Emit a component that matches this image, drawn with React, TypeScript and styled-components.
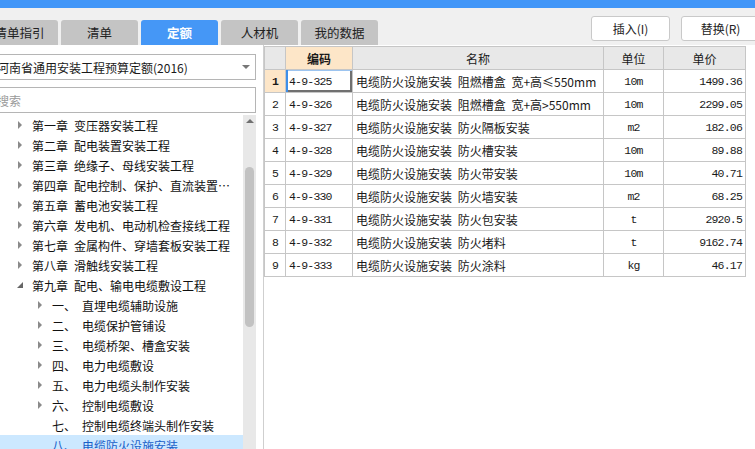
import React from "react";
import styled, { createGlobalStyle, css } from "styled-components";

const GlobalStyle = createGlobalStyle`
  html, body {
    margin: 0;
    padding: 0;
  }
  body {
    width: 755px;
    height: 449px;
    overflow: hidden;
    background: #f0f0f0;
    font-family: "Noto Sans CJK SC", "Liberation Sans", sans-serif;
    font-size: 12px;
    color: #1a1a1a;
  }
  * {
    box-sizing: border-box;
  }
`;

const Page = styled.div`
  display: flex;
  flex-direction: column;
  width: 755px;
  height: 449px;
  overflow: hidden;
`;

const TitleStrip = styled.div`
  height: 8px;
  background: #4196f8;
`;

const Toolbar = styled.div`
  height: 37px;
  display: flex;
  justify-content: space-between;
  background: #f0f0f0;
`;

const Tabs = styled.div`
  display: flex;
  align-items: flex-end;
  gap: 3px;
  margin-left: -19px;
`;

const Tab = styled.div<{ $active?: boolean }>`
  width: 77px;
  height: 25px;
  display: flex;
  align-items: center;
  justify-content: center;
  border-radius: 3px 3px 0 0;
  font-size: 12.5px;
  background: #c4c4c4;
  color: #222;
  ${({ $active }) =>
    $active &&
    css`
      background: #4597f6;
      color: #fff;
      font-weight: bold;
    `}
`;

const Actions = styled.div`
  display: flex;
  gap: 11px;
  padding-top: 8px;
  margin-right: -5px;
`;

const ActionButton = styled.button`
  width: 79px;
  height: 25px;
  background: #fff;
  border: 1px solid #c9c9c9;
  border-radius: 3px;
  font-family: "Noto Sans CJK SC", "Liberation Sans", sans-serif;
  font-size: 12px;
  color: #222;
  padding: 0;
`;

const Main = styled.div`
  flex: 1;
  display: flex;
  background: #fff;
  min-height: 0;
`;

const LeftPanel = styled.div`
  width: 257px;
  display: flex;
  flex-direction: column;
  padding-top: 9px;
`;

const Field = styled.div<{ $placeholder?: boolean }>`
  position: relative;
  height: 26px;
  margin-left: -10px;
  margin-right: 1px;
  border: 1px solid #b5b5b5;
  display: flex;
  align-items: center;
  padding-left: 6px;
  font-size: 12px;
  white-space: nowrap;
  color: ${({ $placeholder }) => ($placeholder ? "#9a9a9a" : "#1a1a1a")};
  & + & {
    margin-top: 7px;
  }
`;

const DropArrow = styled.span`
  position: absolute;
  right: 5px;
  top: 10px;
  border-left: 4px solid transparent;
  border-right: 4px solid transparent;
  border-top: 4px solid #777;
`;

const TreeArea = styled.div`
  flex: 1;
  display: flex;
  margin-top: 2px;
  min-height: 0;
`;

const TreeList = styled.div`
  flex: 1;
  overflow: hidden;
`;

const TreeRow = styled.div<{ $level: number; $selected?: boolean }>`
  height: 20px;
  display: flex;
  align-items: center;
  padding-left: ${({ $level }) => 12 + $level * 20}px;
  padding-right: 8px;
  white-space: nowrap;
  font-size: 12px;
  color: ${({ $selected }) => ($selected ? "#1a5fc8" : "#111")};
  background: ${({ $selected }) => ($selected ? "#cce8ff" : "transparent")};
`;

const Toggle = styled.span<{ $state: "closed" | "open" | "none" }>`
  width: 20px;
  height: 20px;
  flex: none;
  position: relative;
  &::after {
    content: "";
    position: absolute;
    ${({ $state }) =>
      $state === "closed"
        ? css`
            left: 6px;
            top: 6px;
            border-top: 4px solid transparent;
            border-bottom: 4px solid transparent;
            border-left: 4px solid #8a8a8a;
          `
        : $state === "open"
        ? css`
            left: 5px;
            top: 7px;
            border-left: 6px solid transparent;
            border-bottom: 6px solid #666;
          `
        : css`
            display: none;
          `}
  }
`;

const Num = styled.span`
  margin-right: 6px;
`;

const Scrollbar = styled.div`
  width: 13px;
  margin-right: 1px;
  background: #e8e8e8;
  position: relative;
  flex: none;
`;

const ScrollUp = styled.span`
  position: absolute;
  top: 4px;
  left: 3px;
  border-left: 4px solid transparent;
  border-right: 4px solid transparent;
  border-bottom: 4px solid #707070;
`;

const ScrollThumb = styled.div`
  position: absolute;
  left: 2px;
  right: 2px;
  top: 52px;
  height: 160px;
  border-radius: 5px;
  background: #c2c2c2;
`;

const Splitter = styled.div`
  width: 6px;
  background: #fff;
`;

const RightPanel = styled.div`
  flex: 1;
  border-left: 1px solid #cfcfcf;
  padding-top: 1px;
`;

const Grid = styled.table`
  border-collapse: collapse;
  table-layout: fixed;
  width: 482px;
  border-left: 1px solid #a8a8a8;
`;

const Cell = styled.td<{
  $align?: "left" | "center" | "right";
  $mono?: boolean;
  $head?: boolean;
  $hot?: boolean;
  $current?: boolean;
}>`
  border: 1px solid #c6c6c6;
  height: 23px;
  padding: 0 3px;
  white-space: nowrap;
  overflow: hidden;
  font-size: 12px;
  font-weight: normal;
  word-spacing: 3px;
  text-align: ${({ $align }) => $align || "left"};
  background: ${({ $head, $hot }) => ($hot ? "#fde6c8" : $head ? "#e8e8e8" : "#fff")};
  ${({ $mono }) =>
    $mono &&
    css`
      font-family: "Liberation Mono", "DejaVu Sans Mono", monospace;
      font-size: 11.5px;
      letter-spacing: -0.8px;
    `}
  ${({ $hot }) =>
    $hot &&
    css`
      font-weight: bold;
    `}
  ${({ $current }) =>
    $current &&
    css`
      box-shadow: inset 2px 0 0 #3d8ee8, inset 0 1px 0 #9cc4f0, inset -2px -2px 0 #707070;
    `}
`;

type TreeItem = {
  level: number;
  toggle: "closed" | "open" | "none";
  num: string;
  title: string;
  selected?: boolean;
};

const tree: TreeItem[] = [
  { level: 0, toggle: "closed", num: "第一章", title: "变压器安装工程" },
  { level: 0, toggle: "closed", num: "第二章", title: "配电装置安装工程" },
  { level: 0, toggle: "closed", num: "第三章", title: "绝缘子、母线安装工程" },
  { level: 0, toggle: "closed", num: "第四章", title: "配电控制、保护、直流装置⋯" },
  { level: 0, toggle: "closed", num: "第五章", title: "蓄电池安装工程" },
  { level: 0, toggle: "closed", num: "第六章", title: "发电机、电动机检查接线工程" },
  { level: 0, toggle: "closed", num: "第七章", title: "金属构件、穿墙套板安装工程" },
  { level: 0, toggle: "closed", num: "第八章", title: "滑触线安装工程" },
  { level: 0, toggle: "open", num: "第九章", title: "配电、输电电缆敷设工程" },
  { level: 1, toggle: "closed", num: "一、", title: "直埋电缆辅助设施" },
  { level: 1, toggle: "closed", num: "二、", title: "电缆保护管铺设" },
  { level: 1, toggle: "closed", num: "三、", title: "电缆桥架、槽盒安装" },
  { level: 1, toggle: "closed", num: "四、", title: "电力电缆敷设" },
  { level: 1, toggle: "closed", num: "五、", title: "电力电缆头制作安装" },
  { level: 1, toggle: "closed", num: "六、", title: "控制电缆敷设" },
  { level: 1, toggle: "none", num: "七、", title: "控制电缆终端头制作安装" },
  { level: 1, toggle: "none", num: "八、", title: "电缆防火设施安装", selected: true },
];

const rows = [
  ["4-9-325", "电缆防火设施安装 阻燃槽盒 宽+高≤550mm", "10m", "1499.36"],
  ["4-9-326", "电缆防火设施安装 阻燃槽盒 宽+高>550mm", "10m", "2299.05"],
  ["4-9-327", "电缆防火设施安装 防火隔板安装", "m2", "182.06"],
  ["4-9-328", "电缆防火设施安装 防火槽安装", "10m", "89.88"],
  ["4-9-329", "电缆防火设施安装 防火带安装", "10m", "40.71"],
  ["4-9-330", "电缆防火设施安装 防火墙安装", "m2", "68.25"],
  ["4-9-331", "电缆防火设施安装 防火包安装", "t", "2920.5"],
  ["4-9-332", "电缆防火设施安装 防火堵料", "t", "9162.74"],
  ["4-9-333", "电缆防火设施安装 防火涂料", "kg", "46.17"],
];

const tabs = ["清单指引", "清单", "定额", "人材机", "我的数据"];

const App: React.FC = () => {
  return (
    <Page>
      <GlobalStyle />
      <TitleStrip />
      <Toolbar>
        <Tabs>
          {tabs.map((t, i) => (
            <Tab key={t} $active={i === 2}>
              {t}
            </Tab>
          ))}
        </Tabs>
        <Actions>
          <ActionButton>插入(I)</ActionButton>
          <ActionButton>替换(R)</ActionButton>
        </Actions>
      </Toolbar>
      <Main>
        <LeftPanel>
          <Field>
            河南省通用安装工程预算定额(2016)
            <DropArrow />
          </Field>
          <Field $placeholder>搜索</Field>
          <TreeArea>
            <TreeList>
              {tree.map((item) => (
                <TreeRow key={item.num + item.title} $level={item.level} $selected={item.selected}>
                  <Toggle $state={item.toggle} />
                  <Num>{item.num}</Num>
                  <span>{item.title}</span>
                </TreeRow>
              ))}
            </TreeList>
            <Scrollbar>
              <ScrollUp />
              <ScrollThumb />
            </Scrollbar>
          </TreeArea>
        </LeftPanel>
        <Splitter />
        <RightPanel>
          <Grid>
            <colgroup>
              <col style={{ width: 21 }} />
              <col style={{ width: 67 }} />
              <col style={{ width: 251 }} />
              <col style={{ width: 60 }} />
              <col style={{ width: 82 }} />
            </colgroup>
            <thead>
              <tr>
                <Cell as="th" $head />
                <Cell as="th" $head $hot $align="center">
                  编码
                </Cell>
                <Cell as="th" $head $align="center">
                  名称
                </Cell>
                <Cell as="th" $head $align="center">
                  单位
                </Cell>
                <Cell as="th" $head $align="center">
                  单价
                </Cell>
              </tr>
            </thead>
            <tbody>
              {rows.map((r, i) => (
                <tr key={r[0]}>
                  <Cell $align="center" $mono $hot={i === 0}>
                    {i + 1}
                  </Cell>
                  <Cell $mono $current={i === 0}>
                    {r[0]}
                  </Cell>
                  <Cell>{r[1]}</Cell>
                  <Cell $align="center" $mono>
                    {r[2]}
                  </Cell>
                  <Cell $align="right" $mono>
                    {r[3]}
                  </Cell>
                </tr>
              ))}
            </tbody>
          </Grid>
        </RightPanel>
      </Main>
    </Page>
  );
};

export default App;
